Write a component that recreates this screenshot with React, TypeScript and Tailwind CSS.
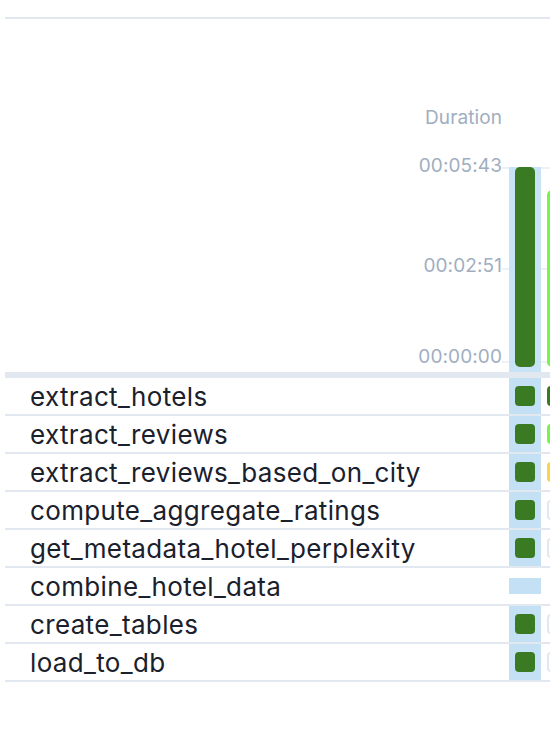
import React from "react";

type Cell = "success" | "running" | "retry" | "none" | "empty";

const tasks: { name: string; second: Cell; first: boolean }[] = [
  { name: "extract_hotels", second: "success", first: true },
  { name: "extract_reviews", second: "running", first: true },
  { name: "extract_reviews_based_on_city", second: "retry", first: true },
  { name: "compute_aggregate_ratings", second: "none", first: true },
  { name: "get_metadata_hotel_perplexity", second: "none", first: true },
  { name: "combine_hotel_data", second: "empty", first: false },
  { name: "create_tables", second: "none", first: true },
  { name: "load_to_db", second: "none", first: true },
];

function SecondSquare({ state }: { state: Cell }) {
  if (state === "empty") return null;
  if (state === "success")
    return <div className="w-[20px] h-[20px] rounded-[4px] bg-[#3a7a23]" />;
  if (state === "running")
    return <div className="w-[20px] h-[20px] rounded-[4px] bg-[#76f54b]" />;
  if (state === "retry")
    return <div className="w-[20px] h-[20px] rounded-[4px] bg-[#f8d64a]" />;
  return (
    <div className="w-[20px] h-[20px] rounded-[4px] bg-white border-2 border-[#e2e8f0]" />
  );
}

export default function App() {
  return (
    <div className="w-[550px] h-[756px] bg-white overflow-hidden font-['Inter',sans-serif]">
      <div className="pl-[5px] pt-[17px]">
        <div className="h-[2px] bg-[#e2e8f0]" />
        {/* Chart header */}
        <div className="flex h-[353px]">
          <div className="w-[497px] shrink-0 flex flex-col items-end text-[19px] leading-[24px] text-[#a0aec0] tracking-[0.1px]">
            <div className="mt-[87px]">Duration</div>
            <div className="mt-[24px]">00:05:43</div>
            <div className="mt-[76px]">00:02:51</div>
            <div className="mt-[67px]">00:00:00</div>
          </div>
          <div className="relative flex-1 flex">
            <div className="absolute left-0 right-0 top-[148px] h-[2px] bg-[#edf2f7]" />
            <div className="absolute left-0 right-0 top-[249px] h-[2px] bg-[#edf2f7]" />
            <div className="absolute left-0 right-0 top-[342px] h-[2px] bg-[#edf2f7]" />
            <div className="w-[7px] shrink-0" />
            <div className="relative w-[32px] shrink-0 flex flex-col">
              <div className="h-[148px]" />
              <div className="flex-1 bg-[#c3e0f5]/90 flex justify-center pb-[5px]">
                <div className="w-[20px] h-full rounded-[5px] bg-[#3a7a23]" />
              </div>
            </div>
            <div className="relative w-[32px] shrink-0 flex flex-col">
              <div className="h-[171px]" />
              <div className="flex-1 flex pl-[6px] pb-[5px]">
                <div className="w-[20px] h-full rounded-[5px] bg-[#76f54b]" />
              </div>
            </div>
          </div>
        </div>
        <div className="h-[6px] bg-[#e2e8f0]" />
        {/* Task rows */}
        {tasks.map((t) => (
          <div key={t.name} className="flex h-[38px] border-b-2 border-[#e2e8f0]">
            <div className="w-[504px] shrink-0 flex items-center pl-[25px] pt-[2px] text-[26px] leading-[32px] text-[#1a202c] tracking-[0.35px]">
              {t.name}
            </div>
            {t.first ? (
              <div className="w-[32px] shrink-0 h-full bg-[#c3e0f5] flex items-center justify-center">
                <div className="w-[20px] h-[20px] rounded-[4px] bg-[#3a7a23]" />
              </div>
            ) : (
              <div className="w-[32px] shrink-0 h-full flex items-center">
                <div className="w-full h-[16px] bg-[#c3e0f5]" />
              </div>
            )}
            <div className="w-[32px] shrink-0 h-full flex items-center pl-[6px]">
              <SecondSquare state={t.second} />
            </div>
          </div>
        ))}
      </div>
    </div>
  );
}
